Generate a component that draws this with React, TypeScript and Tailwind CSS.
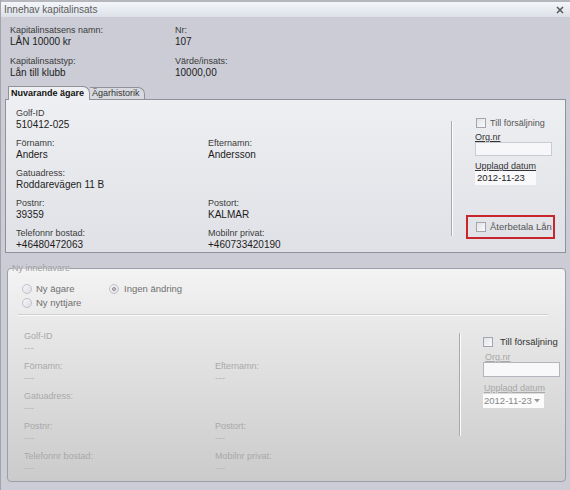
import React from 'react';

type FieldProps = { label: string; value: string; disabled?: boolean; wide?: boolean };

function Field({ label, value, disabled, wide }: FieldProps) {
  return (
    <div className={wide ? 'col-span-2' : ''}>
      <div className={disabled ? 'text-[9px] leading-[11px] text-[#a9a9a9]' : 'text-[9px] leading-[11px] text-[#3a3a3a]'}>
        {label}
      </div>
      <div className={disabled ? 'text-[10px] leading-[12px] text-[#b9b9b9]' : 'text-[10px] leading-[12px] text-[#1c1c1c]'}>
        {value}
      </div>
    </div>
  );
}

function Checkbox() {
  return <span className="block w-[10px] h-[10px] shrink-0 border border-[#a4a6ae] bg-gradient-to-br from-[#e2e3e8] to-[#fbfbfd]" />;
}

function Radio({ checked }: { checked?: boolean }) {
  return (
    <span className="flex w-[10px] h-[10px] shrink-0 items-center justify-center rounded-full border border-[#c0c2c8] bg-gradient-to-br from-[#f6f6f8] to-[#dedfe3]">
      {checked && <span className="block w-[4px] h-[4px] rounded-full border border-[#8e9096] bg-[#c8c9ce]" />}
    </span>
  );
}

function Separator({ className }: { className: string }) {
  return <div className={`w-[2px] shrink-0 border-l border-l-[#a8aab1] border-r border-r-[#fbfbfd] ${className}`} />;
}

export default function App() {
  return (
    <div className="w-[570px] h-[490px] overflow-hidden flex flex-col bg-[#cbccd6] border-l border-[#a2a3ab] font-['Liberation_Sans',Arial,sans-serif]">
      {/* title bar */}
      <div className="h-[17px] shrink-0 flex items-center justify-between border-t-2 border-[#b5b7bd] bg-gradient-to-b from-[#f4f6f9] to-[#dce1e8] pl-[3px] pr-[6px]">
        <span className="text-[10px] leading-[12px] text-[#5c5c5c]">Innehav kapitalinsats</span>
        <svg width="8" height="8" viewBox="0 0 8 8">
          <path d="M1 1 L7 7 M7 1 L1 7" stroke="#5a5a5a" strokeWidth="1.6" />
        </svg>
      </div>

      {/* info */}
      <div className="grid grid-cols-[165px_1fr] gap-y-[8px] pl-[9px] pt-[8px]">
        <Field label="Kapitalinsatsens namn:" value="LÅN 10000 kr" />
        <Field label="Nr:" value="107" />
        <Field label="Kapitalinsatstyp:" value="Lån till klubb" />
        <Field label="Värde/insats:" value="10000,00" />
      </div>

      {/* tabs */}
      <div className="relative z-10 mt-[7px] h-[13px] flex items-end pl-[7px]">
        <div className="h-[14px] -mb-px pl-[2px] pr-[5px] border border-b-0 border-[#8e939b] rounded-tr-[7px] bg-[#eeeff2] text-[9px] leading-[13px] font-bold text-[#111]">
          Nuvarande ägare
        </div>
        <div className="h-[12px] pl-[2px] pr-[4px] border border-l-0 border-b-0 border-[#8e939b] rounded-tr-[7px] bg-[#d9dadf] text-[9px] leading-[11px] text-[#333]">
          Ägarhistorik
        </div>
      </div>

      {/* current owner panel */}
      <div className="ml-[4px] w-[561px] h-[154px] shrink-0 flex border border-[#8e939b] bg-gradient-to-b from-[#eeeff2] to-[#e0e1e6]">
        <div className="w-[445px] shrink-0 pl-[10px] pt-[8px]">
          <div className="grid grid-cols-[192px_1fr] gap-y-[7px]">
            <Field label="Golf-ID" value="510412-025" wide />
            <Field label="Förnamn:" value="Anders" />
            <Field label="Efternamn:" value="Andersson" />
            <Field label="Gatuadress:" value="Roddarevägen 11 B" wide />
            <Field label="Postnr:" value="39359" />
            <Field label="Postort:" value="KALMAR" />
            <Field label="Telefonnr bostad:" value="+46480472063" />
            <Field label="Mobilnr privat:" value="+460733420190" />
          </div>
        </div>
        <Separator className="mt-[21px] h-[115px]" />
        <div className="pl-[22px] pt-[18px] flex flex-col">
          <div className="flex items-center gap-[4px] pl-[1px] h-[10px]">
            <Checkbox />
            <span className="text-[9px] leading-[10px] text-[#555]">Till försäljning</span>
          </div>
          <div className="mt-[4px] text-[9px] leading-[10px] text-[#333] underline">Org.nr</div>
          <div className="w-[77px] h-[14px] border border-[#c9cad2] bg-[#f7f7fa]" />
          <div className="mt-[5px] text-[9px] leading-[10px] text-[#333] underline">Upplagd datum</div>
          <div className="w-[61px] h-[14px] bg-[#f9f9fb] pl-[2px] text-[9.5px] leading-[14px] text-[#222]">2012-11-23</div>
          <div className="mt-[30px] -ml-[9px] w-[89px] h-[24px] flex items-center gap-[4px] pl-[8px] border-2 border-[#c8262c]">
            <Checkbox />
            <span className="text-[9.5px] leading-[10px] text-[#555]">Återbetala Lån</span>
          </div>
        </div>
      </div>

      {/* new holder */}
      <fieldset className="mt-[10px] ml-[6px] w-[559px] h-[219px] shrink-0 rounded-[4px] border border-[#9c9ea5] bg-gradient-to-b from-[#f3f3f3] to-[#cbcbcb]">
        <legend className="ml-[4px] text-[9px] leading-[10px] text-[#a0a0a0]">Ny innehavare</legend>
        <div className="grid grid-cols-[87px_1fr] gap-y-[2px] pl-[14px] pt-[10px]">
          <label className="flex items-center gap-[4px] h-[12px]">
            <Radio />
            <span className="text-[9.5px] text-[#707070]">Ny ägare</span>
          </label>
          <label className="flex items-center gap-[5px] h-[12px]">
            <Radio checked />
            <span className="text-[9.5px] text-[#707070]">Ingen ändring</span>
          </label>
          <label className="flex items-center gap-[4px] h-[12px]">
            <Radio />
            <span className="text-[9.5px] text-[#707070]">Ny nyttjare</span>
          </label>
        </div>
        <div className="mt-[5px] ml-[10px] w-[530px] border-t border-t-[#cfcfcf] border-b border-b-[#fafafa]" />
        <div className="flex">
          <div className="w-[451px] shrink-0 pl-[16px] pt-[15px]">
            <div className="grid grid-cols-[191px_1fr] gap-y-[7px]">
              <Field label="Golf-ID" value="---" disabled wide />
              <Field label="Förnamn:" value="---" disabled />
              <Field label="Efternamn:" value="---" disabled />
              <Field label="Gatuadress:" value="---" disabled wide />
              <Field label="Postnr:" value="---" disabled />
              <Field label="Postort:" value="---" disabled />
              <Field label="Telefonnr bostad:" value="---" disabled />
              <Field label="Mobilnr privat:" value="---" disabled />
            </div>
          </div>
          <Separator className="mt-[17px] h-[103px]" />
          <div className="pl-[22px] pt-[21px] flex flex-col">
            <div className="flex items-center gap-[7px] h-[10px]">
              <Checkbox />
              <span className="text-[9.5px] leading-[10px] text-[#333]">Till försäljning</span>
            </div>
            <div className="mt-[6px] pl-[2px] text-[9px] leading-[9px] text-[#a8a8a8] underline">Org.nr</div>
            <div className="w-[77px] h-[15px] border border-[#b4b5bc] bg-[#f8f8fb]" />
            <div className="mt-[7px] pl-[1px] text-[9px] leading-[9px] text-[#a8a8a8] underline">Upplagd datum</div>
            <div className="mt-[1px] w-[61px] h-[14px] flex items-center justify-between bg-[#fbfbfb] pl-[1px] pr-[4px]">
              <span className="text-[9.5px] leading-[14px] text-[#888]">2012-11-23</span>
              <svg width="6" height="4" viewBox="0 0 6 4">
                <path d="M0 0 L6 0 L3 3.5 Z" fill="#9a9a9a" />
              </svg>
            </div>
          </div>
        </div>
      </fieldset>
    </div>
  );
}
